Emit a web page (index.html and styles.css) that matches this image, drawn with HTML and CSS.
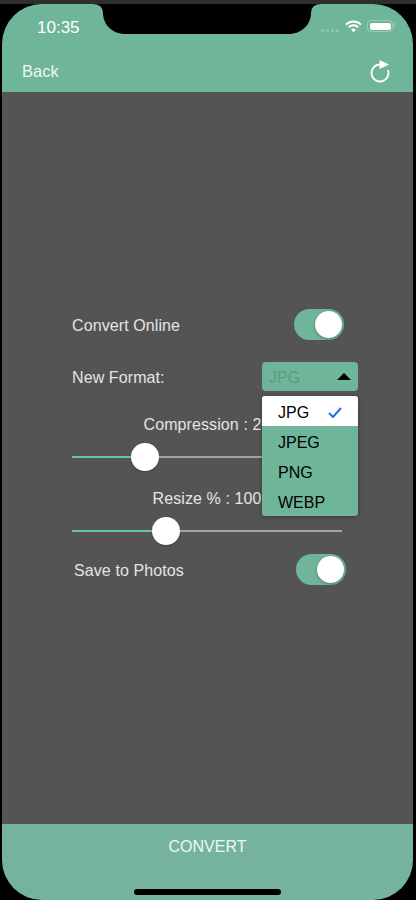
FILE: index.html
```html
<!DOCTYPE html>
<html lang="en">
<head>
    <meta charset="UTF-8">
    <meta name="viewport" content="width=device-width, initial-scale=1.0">
    <title>Convert</title>
    <link rel="stylesheet" href="styles.css">
</head>
<body>
    <div class="screen">
        <header class="header">
            <svg class="notch" width="230" height="30" viewBox="0 0 230 30">
                <path d="M0 0 H230 Q219 0 219 9 C219 21 209 30 197 30 H33 C21 30 11 21 11 9 Q11 0 0 0 Z" fill="#000"/>
            </svg>
            <div class="status-bar">
                <span class="time">10:35</span>
                <div class="status-icons">
                    <span class="signal"><i></i><i></i><i></i><i></i></span>
                    <svg width="17" height="13" viewBox="0 0 17 13">
                        <path d="M1 4.6 A10.6 10.6 0 0 1 16 4.6" fill="none" stroke="#fff" stroke-width="1.9"/>
                        <path d="M3.7 7.3 A6.8 6.8 0 0 1 13.3 7.3" fill="none" stroke="#fff" stroke-width="1.9"/>
                        <path d="M6.1 9.7 A3.4 3.4 0 0 1 10.9 9.7 L8.5 12.3 Z" fill="#fff"/>
                    </svg>
                    <div class="battery"><div class="battery-level"></div></div>
                </div>
            </div>
            <div class="nav-bar">
                <span class="back">Back</span>
                <svg class="refresh" width="22" height="26" viewBox="0 0 22 26">
                    <path d="M11 6.5 A8.5 8.5 0 1 0 19 12" fill="none" stroke="#fff" stroke-width="1.8"/>
                    <path d="M10.5 2 L20 6.5 L10.5 11 Z" fill="#fff"/>
                </svg>
            </div>
        </header>

        <main class="content">
            <div class="form">
                <div class="row toggle-row">
                    <span class="label">Convert Online</span>
                    <div class="toggle"><div class="knob"></div></div>
                </div>

                <div class="row format-row">
                    <span class="label">New Format:</span>
                    <div class="select">
                        <span class="select-value">JPG</span>
                        <div class="caret"></div>
                    </div>
                </div>

                <div class="slider-label compression-label">Compression : 20</div>
                <div class="slider">
                    <div class="slider-fill" style="width: 59px"></div>
                    <div class="slider-thumb"></div>
                    <div class="slider-rest"></div>
                </div>

                <div class="slider-label resize-label">Resize % : 100</div>
                <div class="slider">
                    <div class="slider-fill" style="width: 80px"></div>
                    <div class="slider-thumb"></div>
                    <div class="slider-rest"></div>
                </div>

                <div class="row toggle-row save-row">
                    <span class="label">Save to Photos</span>
                    <div class="toggle"><div class="knob"></div></div>
                </div>

                <ul class="menu">
                    <li class="menu-item selected">JPG
                        <svg width="14" height="11" viewBox="0 0 14 11">
                            <path d="M1 6 L5 10 L13 1" fill="none" stroke="#1a73e8" stroke-width="2"/>
                        </svg>
                    </li>
                    <li class="menu-item">JPEG</li>
                    <li class="menu-item">PNG</li>
                    <li class="menu-item">WEBP</li>
                </ul>
            </div>
        </main>

        <footer class="footer">
            <span class="convert">CONVERT</span>
            <div class="home-bar"></div>
        </footer>
    </div>
</body>
</html>
```

FILE: styles.css
```css
html, body {
    margin: 0;
    height: 900px;
    overflow: hidden;
}
body {
    font-family: "Liberation Sans", Arial, sans-serif;
    background-color: #000;
    border-top: 4px solid #2e2e2e;
    box-sizing: border-box;
}
.screen {
    display: flex;
    flex-direction: column;
    height: 896px;
    margin: 0 3px 0 2px;
    border-radius: 40px;
    overflow: hidden;
    color: #fff;
}

/* header */
.header {
    position: relative;
    height: 88px;
    background-color: #6fb599;
    display: flex;
    flex-direction: column;
    flex-shrink: 0;
}
.notch {
    position: absolute;
    top: 0;
    left: 90px;
}
.status-bar {
    display: flex;
    justify-content: space-between;
    align-items: center;
    height: 44px;
    padding: 2px 20px 0 35px;
    box-sizing: border-box;
}
.time {
    padding-top: 2px;
    font-size: 17px;
}
.status-icons {
    display: flex;
    align-items: center;
    gap: 5px;
    margin-top: -2px;
}
.signal {
    display: flex;
    gap: 2px;
    margin-top: 9px;
    margin-right: 1px;
}
.signal i {
    width: 3px;
    height: 3px;
    border-radius: 50%;
    background-color: rgba(255, 255, 255, 0.25);
}
.battery {
    position: relative;
    width: 26px;
    height: 12px;
    padding: 1.5px;
    box-sizing: border-box;
    border: 1px solid rgba(255, 255, 255, 0.3);
    border-radius: 4px;
}
.battery::after {
    content: "";
    position: absolute;
    top: 2px;
    right: -3px;
    width: 1px;
    height: 4px;
    background-color: rgba(255, 255, 255, 0.3);
}
.battery-level {
    height: 100%;
    background-color: #fff;
    border-radius: 2px;
}
.nav-bar {
    display: flex;
    justify-content: space-between;
    align-items: center;
    flex: 1;
    padding: 2px 22px 0 20px;
}
.back {
    font-size: 16.5px;
    color: #f0f7f4;
}

/* form */
.content {
    flex: 1;
    background-color: #545454;
    padding: 217px 0 0 70px;
}
.form {
    position: relative;
    width: 286px;
}
.row {
    display: flex;
    justify-content: space-between;
    align-items: center;
}
.label {
    padding-top: 2px;
    font-size: 16px;
    letter-spacing: 0.1px;
    color: #e4e4e4;
}
.toggle-row {
    width: 272px;
}
.save-row {
    margin: 9px 0 0 2px;
}
.toggle {
    display: flex;
    justify-content: flex-end;
    align-items: center;
    width: 50px;
    height: 31px;
    padding: 0 2px;
    box-sizing: border-box;
    background-color: #6fb599;
    border-radius: 16px;
}
.knob {
    width: 27px;
    height: 27px;
    background-color: #fff;
    border-radius: 50%;
    box-shadow: 0 1px 3px rgba(0, 0, 0, 0.3);
}
.format-row {
    margin-top: 22px;
}
.select {
    display: flex;
    justify-content: space-between;
    align-items: center;
    width: 96px;
    height: 29px;
    padding: 0 7px;
    box-sizing: border-box;
    background-color: #6fb599;
    border-radius: 4px;
    color: #5c9c85;
    font-size: 16px;
}
.select-value {
    padding-top: 2px;
}
.caret {
    width: 0;
    height: 0;
    border-left: 7px solid transparent;
    border-right: 7px solid transparent;
    border-bottom: 7px solid #000;
}
.slider-label {
    width: 270px;
    padding-top: 1px;
    text-align: center;
    font-size: 16px;
    letter-spacing: 0.1px;
    line-height: 20px;
    color: #e4e4e4;
}
.compression-label {
    margin-top: 23px;
}
.resize-label {
    margin-top: 17px;
}
.slider {
    display: flex;
    align-items: center;
    width: 270px;
    height: 28px;
    margin-top: 8px;
}
.slider-fill {
    height: 2px;
    background-color: #62c7a3;
}
.slider-thumb {
    width: 28px;
    height: 28px;
    flex-shrink: 0;
    background-color: #fff;
    border-radius: 50%;
    box-shadow: 0 1px 2px rgba(0, 0, 0, 0.25);
}
.slider-rest {
    flex: 1;
    height: 2px;
    background-color: #a3a3a3;
}

/* dropdown open over the form */
.menu {
    position: absolute;
    top: 87px;
    right: 0;
    width: 96px;
    margin: 0;
    padding: 0;
    list-style: none;
    background-color: #6fb599;
    border-radius: 3px;
    overflow: hidden;
    box-shadow: 0 1px 4px rgba(0, 0, 0, 0.35);
}
.menu-item {
    display: flex;
    justify-content: space-between;
    align-items: center;
    height: 30px;
    padding: 3px 16px 0;
    box-sizing: border-box;
    font-size: 16px;
    color: #000;
}
.menu-item.selected {
    background-color: #fff;
}

/* footer */
.footer {
    display: flex;
    flex-direction: column;
    align-items: center;
    height: 76px;
    flex-shrink: 0;
    background-color: #75b39c;
}
.convert {
    margin-top: 13px;
    line-height: 20px;
    font-size: 16px;
    color: #f0f7f4;
}
.home-bar {
    width: 147px;
    height: 6px;
    margin-top: 32px;
    background-color: #000;
    border-radius: 3px;
}
```
